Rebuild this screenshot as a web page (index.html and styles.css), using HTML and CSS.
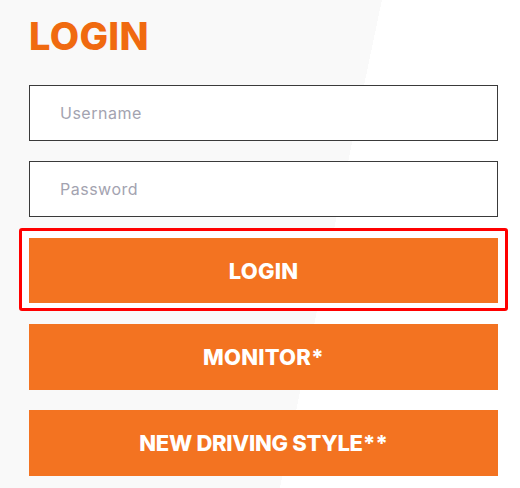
FILE: index.html
```html
<!DOCTYPE html>
<html lang="en">
<head>
<meta charset="utf-8">
<title>Login</title>
<link rel="stylesheet" href="styles.css">
</head>
<body>
<main class="panel">
  <h1 class="title">LOGIN</h1>
  <form class="form">
    <input class="field" type="text" placeholder="Username">
    <input class="field field-second" type="password" placeholder="Password">
    <div class="focus-ring">
      <button class="btn btn-login" type="button">LOGIN</button>
    </div>
    <button class="btn btn-monitor" type="button">MONITOR*</button>
    <button class="btn btn-style" type="button">NEW DRIVING STYLE**</button>
  </form>
</main>
</body>
</html>
```
FILE: styles.css
```css
html {
  background: linear-gradient(101.8deg, #f9f9f9 61.4%, #ffffff 61.4%);
  min-height: 100%;
}
body {
  margin: 0;
  font-family: Inter, "Liberation Sans", sans-serif;
}
.panel {
  width: 469px;
  padding: 17px 0 0 29px;
}
.title {
  margin: 0;
  font-size: 38px;
  line-height: 38px;
  font-weight: 800;
  color: #f06a10;
  letter-spacing: 0.3px;
}
.form {
  display: flex;
  flex-direction: column;
  margin-top: 30px;
}
.field {
  box-sizing: border-box;
  height: 56px;
  width: 100%;
  margin: 0;
  padding: 0 0 0 30px;
  border: 1px solid #3a3a3a;
  border-radius: 0;
  background: #fff;
  font-family: inherit;
  font-size: 16px;
  letter-spacing: 0.5px;
  color: #333;
  outline: none;
}
.field::placeholder {
  color: #a3a3b0;
}
.field-second {
  margin-top: 20px;
}
.focus-ring {
  margin: 11px -10px 0;
  border: 3px solid #ff0000;
  border-radius: 3px;
  padding: 7px 7px 5px;
  background: #fff;
}
.btn {
  display: block;
  box-sizing: border-box;
  width: 100%;
  height: 66px;
  margin: 0;
  padding: 0;
  border: none;
  border-radius: 0;
  background: #f37321;
  color: #fff;
  font-family: inherit;
  font-size: 22px;
  font-weight: 800;
  letter-spacing: 0.2px;
  text-align: center;
  cursor: pointer;
}
.btn-login {
  height: 65px;
}
.btn-monitor {
  margin-top: 13px;
}
.btn-style {
  margin-top: 20px;
  letter-spacing: -0.3px;
}
```
